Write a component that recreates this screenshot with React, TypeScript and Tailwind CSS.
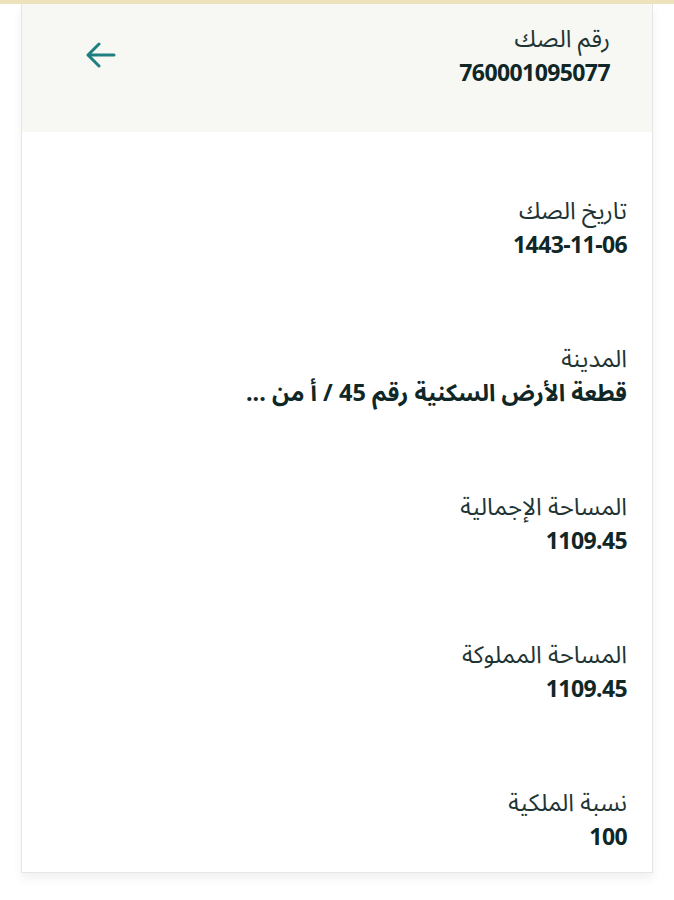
import React from 'react';

const rows = [
  { label: 'تاريخ الصك', value: '1443-11-06', num: true },
  { label: 'المدينة', value: 'قطعة الأرض السكنية رقم 45 / أ من ...', num: false },
  { label: 'المساحة الإجمالية', value: '1109.45', num: true },
  { label: 'المساحة المملوكة', value: '1109.45', num: true },
  { label: 'نسبة الملكية', value: '100', num: true },
];

function BackArrow() {
  return (
    <svg width="30" height="26" viewBox="0 0 30 26" fill="none" stroke="#1f7f80" strokeWidth="3" strokeLinecap="round" strokeLinejoin="round">
      <path d="M28 13H3" />
      <path d="M13 2L2 13l11 11" />
    </svg>
  );
}

const font = { fontFamily: '"Noto Sans", "Noto Sans Arabic", "DejaVu Sans", sans-serif' };

function Field({ label, value, num }: { label: string; value: string; num: boolean }) {
  return (
    <div className="text-right">
      <div className="text-[24px] leading-[34px] text-[#1f3434]">{label}</div>
      <div
        className={
          num
            ? 'text-[23px] leading-[34px] font-bold tracking-[-0.6px] text-[#0f2727]'
            : 'text-[23.5px] leading-[34px] font-bold text-[#0f2727]'
        }
      >
        {value}
      </div>
    </div>
  );
}

export default function App() {
  return (
    <div className="min-h-[900px] bg-white" style={font}>
      <div className="h-[4px] bg-[#ece2bb]" />
      <div dir="rtl" className="mx-[21px] border border-t-0 border-[#e6e6e6] bg-white shadow-[0_6px_10px_rgba(0,0,0,0.06)]">
        <div className="flex items-start justify-between bg-[#f7f8f3] h-[128px] pt-[17px] pr-[42px] pl-[64px]">
          <Field label="رقم الصك" value="760001095077" num />
          <div className="pt-[21px]">
            <BackArrow />
          </div>
        </div>
        <div className="flex flex-col gap-[80px] pt-[61px] pb-[19px] pr-[25px]">
          {rows.map((r) => (
            <Field key={r.label} label={r.label} value={r.value} num={r.num} />
          ))}
        </div>
      </div>
    </div>
  );
}
